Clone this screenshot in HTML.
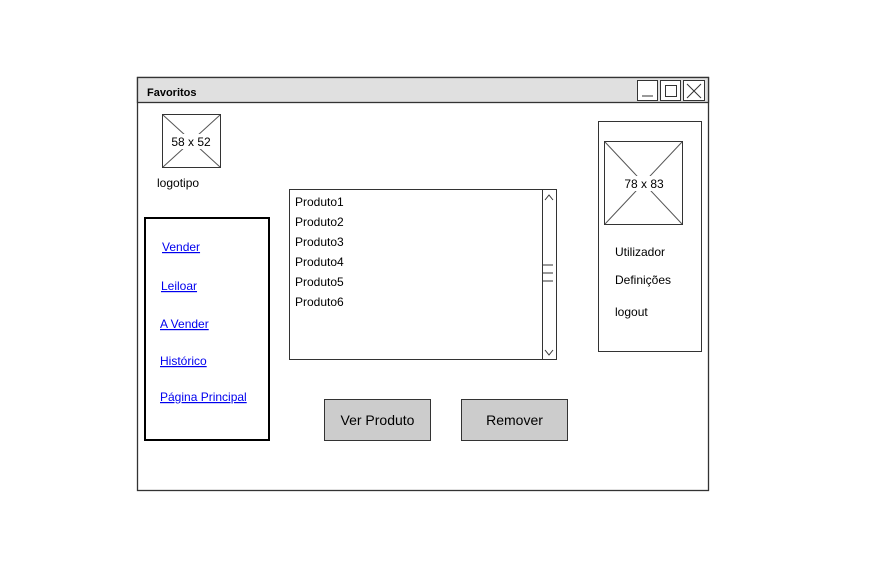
<!DOCTYPE html>
<html><head><meta charset="utf-8"><style>
html,body{margin:0;padding:0;background:#fff;width:891px;height:571px;overflow:hidden}
svg{display:block}
text{font-family:"Liberation Sans",sans-serif;font-size:12px;fill:#000}
.l{fill:#0000ee;text-decoration:underline}
</style></head><body>
<svg width="891" height="571" xmlns="http://www.w3.org/2000/svg">
<rect x="137.5" y="77.5" width="571" height="413" fill="#fff" stroke="#333" stroke-width="1.3"/>
<rect x="137.5" y="77.5" width="571" height="25" fill="#e0e0e0" stroke="#333" stroke-width="1.3"/>
<text x="147" y="96" font-weight="bold" style="font-size:11px">Favoritos</text>
<rect x="637.5" y="80.5" width="20" height="20" fill="#fff" stroke="#333"/>
<line x1="642" y1="96" x2="653" y2="96" stroke="#333"/>
<rect x="660.5" y="80.5" width="20" height="20" fill="#fff" stroke="#333"/>
<rect x="665.5" y="85.5" width="11" height="11" fill="none" stroke="#333"/>
<rect x="683.5" y="80.5" width="21" height="20" fill="#fff" stroke="#333"/>
<path d="M687 84 L701 98 M701 84 L687 98" stroke="#333"/>
<rect x="162.5" y="114.5" width="58" height="53" fill="#fff" stroke="#333"/>
<path d="M163 115 L220 167 M220 115 L163 167" stroke="#555"/>
<rect x="167" y="134" width="48" height="15" fill="#fff"/>
<text x="191" y="146" text-anchor="middle">58 x 52</text>
<text x="157" y="187">logotipo</text>
<rect x="145" y="218" width="124" height="222" fill="#fff" stroke="#000" stroke-width="2"/>
<text x="162" y="251" class="l">Vender</text>
<text x="161" y="290" class="l">Leiloar</text>
<text x="160" y="328" class="l">A Vender</text>
<text x="160" y="365" class="l">Histórico</text>
<text x="160" y="401" class="l">Página Principal</text>
<rect x="289.5" y="189.5" width="267" height="170" fill="#fff" stroke="#333"/>
<line x1="542.5" y1="190" x2="542.5" y2="360" stroke="#333"/>
<path d="M545 200 L549 195 L553 200 M545 350 L549 355 L553 350" stroke="#333" fill="none"/>
<path d="M543 265 H553 M543 273 H553 M543 281 H553" stroke="#333"/>
<text x="295" y="206">Produto1</text>
<text x="295" y="226">Produto2</text>
<text x="295" y="246">Produto3</text>
<text x="295" y="266">Produto4</text>
<text x="295" y="286">Produto5</text>
<text x="295" y="306">Produto6</text>
<rect x="598.5" y="121.5" width="103" height="230" fill="#fff" stroke="#333"/>
<rect x="604.5" y="141.5" width="78" height="83" fill="#fff" stroke="#333"/>
<path d="M605 142 L682 224 M682 142 L605 224" stroke="#555"/>
<rect x="620" y="176" width="48" height="15" fill="#fff"/>
<text x="644" y="188" text-anchor="middle">78 x 83</text>
<text x="615" y="256">Utilizador</text>
<text x="615" y="284">Definições</text>
<text x="615" y="316">logout</text>
<rect x="324.5" y="399.5" width="106" height="41" fill="#cccccc" stroke="#333"/>
<text x="377.5" y="425" text-anchor="middle" style="font-size:14px">Ver Produto</text>
<rect x="461.5" y="399.5" width="106" height="41" fill="#cccccc" stroke="#333"/>
<text x="514.5" y="425" text-anchor="middle" style="font-size:14px">Remover</text>
</svg>
</body></html>
